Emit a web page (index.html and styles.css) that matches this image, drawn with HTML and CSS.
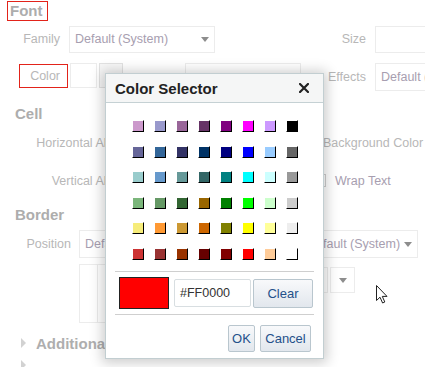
FILE: index.html
```html
<!DOCTYPE html>
<html lang="en">
<head>
  <meta charset="UTF-8" />
  <title>Format - Color Selector</title>
  <link rel="stylesheet" href="styles.css">
</head>
<body>

  <div class="page">
    <!-- Font -->
    <div class="heading heading-font">Font</div>
    <div class="row row-family">
      <div class="lbl lbl-font">Family</div>
      <div class="select w-family">Default (System)<span class="arrow"></span></div>
      <div class="lbl lbl-side">Size</div>
      <div class="field w-size"></div>
    </div>
    <div class="row row-color">
      <div class="lbl lbl-color"><span class="marked">Color</span></div>
      <div class="field color-well"></div>
      <div class="field color-btn"></div>
      <div class="field w-mid"></div>
      <div class="lbl lbl-effects">Effects</div>
      <div class="select w-size">Default (System)</div>
    </div>

    <!-- Cell -->
    <div class="heading heading-cell">Cell</div>
    <div class="row row-cell">
      <div class="lbl lbl-cell">Horizontal Alignment</div>
      <div class="lbl-right bg-color">Background Color</div>
    </div>
    <div class="row row-cell row-vertical">
      <div class="lbl lbl-cell">Vertical Alignment</div>
      <div class="check"></div>
      <div class="lbl-right wrap">Wrap Text</div>
    </div>

    <!-- Border -->
    <div class="heading heading-border">Border</div>
    <div class="row row-position">
      <div class="lbl lbl-position">Position</div>
      <div class="select w-position">Default (System)</div>
      <div class="select w-style">Default (System)<span class="arrow"></span></div>
    </div>
    <div class="row row-box">
      <div class="field border-box"><div class="border-inner"></div></div>
      <div class="field border-width"></div>
      <div class="field border-pick"><span class="arrow"></span></div>
    </div>

    <div class="row row-more">
      <span class="tri"></span>
      <span class="more-text">Additional</span>
    </div>
    <div class="row row-more row-last">
      <span class="tri"></span>
    </div>

    <!-- Color Selector dialog -->
    <div class="dialog">
      <div class="dialog-head">
        <span class="dialog-title">Color Selector</span>
        <svg class="close" width="10" height="10" viewBox="0 0 10 10">
          <path d="M1 1 L9 9 M9 1 L1 9" stroke="#222" stroke-width="2.2" stroke-linecap="square"/>
        </svg>
      </div>
      <div class="swatches" id="swatches"></div>
      <div class="sep"></div>
      <div class="current-row">
        <div class="current"></div>
        <div class="hex">#FF0000</div>
        <button class="btn btn-clear">Clear</button>
      </div>
      <div class="sep sep-2"></div>
      <div class="actions">
        <button class="btn btn-ok">OK</button>
        <button class="btn btn-cancel">Cancel</button>
      </div>
    </div>

    <svg class="cursor" width="13" height="19" viewBox="0 0 13 19">
      <path d="M0.5 0.5 L0.5 15.5 L4 12.2 L6.6 18 L8.8 17 L6.3 11.4 L11 11.4 Z" fill="#fff" stroke="#222" stroke-width="1"/>
    </svg>
  </div>

  <script>
    const colors = [
      "#cc99cc","#9999cc","#996699","#663366","#800080","#ff00ff","#cc99ff","#000000",
      "#666699","#336699","#333366","#003366","#000080","#0000ff","#99ccff","#666666",
      "#99cccc","#6699cc","#669999","#336666","#008080","#00ffff","#ccffff","#999999",
      "#7bb67b","#669966","#336633","#996600","#008000","#00ff00","#ccffcc","#cccccc",
      "#f6ec7a","#ff9933","#cc9933","#cc6600","#808000","#ffff00","#ffff99","#eeeeee",
      "#cc3333","#993333","#993300","#660000","#800000","#ff0000","#ffcc99","#ffffff"
    ];

    const grid = document.getElementById("swatches");
    colors.forEach(c => {
      const s = document.createElement("div");
      s.className = "swatch";
      s.style.backgroundColor = c;
      grid.appendChild(s);
    });
  </script>

</body>
</html>
```

FILE: styles.css
```css
body {
  margin: 0;
  font-family: "Liberation Sans", Arial, sans-serif;
  background: #fff;
  overflow: hidden;
}

.page {
  position: relative;
  width: 600px;
  height: 367px;
  padding-top: 1px;
  box-sizing: border-box;
  font-size: 12.5px;
  color: #b7b7b7;
}

.heading {
  font-weight: bold;
  font-size: 15px;
  color: #adadad;
}

.heading-font {
  width: 41px;
  height: 20px;
  box-sizing: border-box;
  margin-left: 7px;
  padding-left: 2px;
  border: 1px solid #e2231a;
  line-height: 18px;
}

.heading-cell {
  margin-top: 13px;
  padding-left: 15px;
  height: 19px;
  line-height: 19px;
}

.heading-border {
  margin-top: 10px;
  padding-left: 15px;
  height: 20px;
  line-height: 20px;
}

.row {
  display: flex;
  align-items: flex-start;
}

.lbl {
  flex: none;
  box-sizing: border-box;
  text-align: right;
  padding-right: 9px;
}

.field, .select {
  flex: none;
  box-sizing: border-box;
  border: 1px solid #ececec;
  background: #fff;
}

.select {
  display: flex;
  align-items: center;
  justify-content: space-between;
  padding: 0 5px;
  color: #a79eb0;
  white-space: nowrap;
  overflow: hidden;
}

.arrow {
  flex: none;
  width: 0;
  height: 0;
  border-left: 4px solid transparent;
  border-right: 4px solid transparent;
  border-top: 5px solid #8d8d8d;
}

/* font rows */
.row-family {
  margin-top: 5px;
  height: 27px;
  line-height: 27px;
}

.lbl-font { width: 69px; }

.w-family { width: 146px; height: 27px; }

.lbl-side { width: 75px; margin-left: 85px; }

.w-size { width: 150px; height: 28px; }

.row-family .w-size { height: 27px; }

.row-color {
  margin-top: 10px;
  height: 28px;
  line-height: 28px;
}

.lbl-color {
  width: 69px;
  padding-right: 1px;
}

.marked {
  display: inline-block;
  width: 49px;
  height: 24px;
  box-sizing: border-box;
  margin-top: 1px;
  padding-right: 7px;
  border: 1px solid #e2231a;
  line-height: 22px;
  vertical-align: top;
}

.color-well { width: 27px; height: 25px; margin-left: 1px; }

.color-btn {
  width: 24px;
  height: 25px;
  margin-left: 2px;
  background: #f7f7f7;
  border-color: #e2e2e2;
}

.w-mid { width: 116px; height: 25px; margin-left: 62px; }

.lbl-effects { width: 74px; }

/* cell rows */
.row-cell {
  margin-top: 6px;
  height: 28px;
  line-height: 28px;
}

.row-vertical { margin-top: 10px; }

.lbl-cell { width: 160px; }

.bg-color { margin-left: 163px; white-space: nowrap; }

.check {
  flex: none;
  width: 13px;
  height: 13px;
  box-sizing: border-box;
  margin: 7px 0 0 153px;
  border: 1px solid #cfcfcf;
}

.wrap { margin-left: 9px; color: #a79eb0; }

/* border rows */
.row-position {
  margin-top: 5px;
  height: 28px;
}

.lbl-position { width: 79px; padding-right: 8px; line-height: 28px; }

.w-position { width: 181px; height: 28px; }

.w-style { width: 117px; height: 28px; margin-left: 41px; }

.row-box {
  margin-top: 6px;
  height: 59px;
}

.border-box {
  width: 181px;
  height: 59px;
  margin-left: 79px;
}

.border-inner {
  width: 17px;
  height: 57px;
  border-right: 1px solid #ececec;
}

.border-width {
  width: 58px;
  height: 26px;
  margin: 3px 0 0 10px;
}

.border-pick {
  width: 25px;
  height: 26px;
  margin: 3px 0 0 2px;
  display: flex;
  align-items: center;
  justify-content: center;
}

.row-more {
  margin-top: 10px;
  height: 20px;
  align-items: center;
}

.row-last { margin-top: 2px; }

.tri {
  width: 0;
  height: 0;
  margin-left: 21px;
  border-top: 5px solid transparent;
  border-bottom: 5px solid transparent;
  border-left: 5px solid #d2d2d2;
}

.more-text {
  margin-left: 10px;
  font-weight: bold;
  font-size: 15px;
  color: #aeaeae;
}

/* dialog */
.dialog {
  position: absolute;
  left: 105px;
  top: 73px;
  width: 219px;
  height: 286px;
  box-sizing: border-box;
  border: 1px solid #c2ced1;
  background: #fff;
  box-shadow: 0 1px 12px 3px rgba(0,0,0,0.2);
  color: #222;
}

.dialog-head {
  height: 29px;
  box-sizing: border-box;
  display: flex;
  align-items: center;
  justify-content: space-between;
  padding: 0 14px 0 9px;
  background: #f5f6f6;
  border-bottom: 1px solid #c5d1d4;
}

.dialog-title {
  font-weight: bold;
  font-size: 15px;
}

.close { display: block; }

.swatches {
  display: grid;
  grid-template-columns: repeat(8, 12px);
  grid-auto-rows: 12px;
  column-gap: 10px;
  row-gap: 13.6px;
  margin: 17px 0 0 26px;
}

.swatch {
  box-sizing: border-box;
  border: 1px solid;
  border-color: #fff #000 #000 #fff;
}

.sep {
  height: 1px;
  margin: 11px 9px 0;
  background: #cfcfcf;
}

.current-row {
  display: flex;
  align-items: flex-start;
  margin: 5px 0 0 13px;
}

.current {
  width: 50px;
  height: 32px;
  box-sizing: border-box;
  border: 1px solid #222;
  background: #f00;
}

.hex {
  width: 77px;
  height: 28px;
  box-sizing: border-box;
  margin: 2px 0 0 5px;
  padding-left: 5px;
  border: 1px solid #d8dee1;
  border-radius: 2px;
  font-size: 12.5px;
  line-height: 26px;
  color: #333;
}

.btn {
  box-sizing: border-box;
  height: 27px;
  padding: 0;
  border: 1px solid #b9c6ce;
  border-radius: 2px;
  background: linear-gradient(#f8f9fb, #e2e7ed);
  font-family: "Liberation Sans", Arial, sans-serif;
  font-size: 13px;
  color: #24508a;
}

.btn-clear {
  width: 60px;
  height: 29px;
  margin: 2px 0 0 2px;
}

.sep-2 { margin-top: 5px; }

.actions {
  display: flex;
  justify-content: flex-end;
  gap: 5px;
  margin: 10px 12px 0 0;
}

.btn-ok { width: 27px; }

.btn-cancel { width: 51px; }

.cursor {
  position: absolute;
  left: 376px;
  top: 285px;
}
```
